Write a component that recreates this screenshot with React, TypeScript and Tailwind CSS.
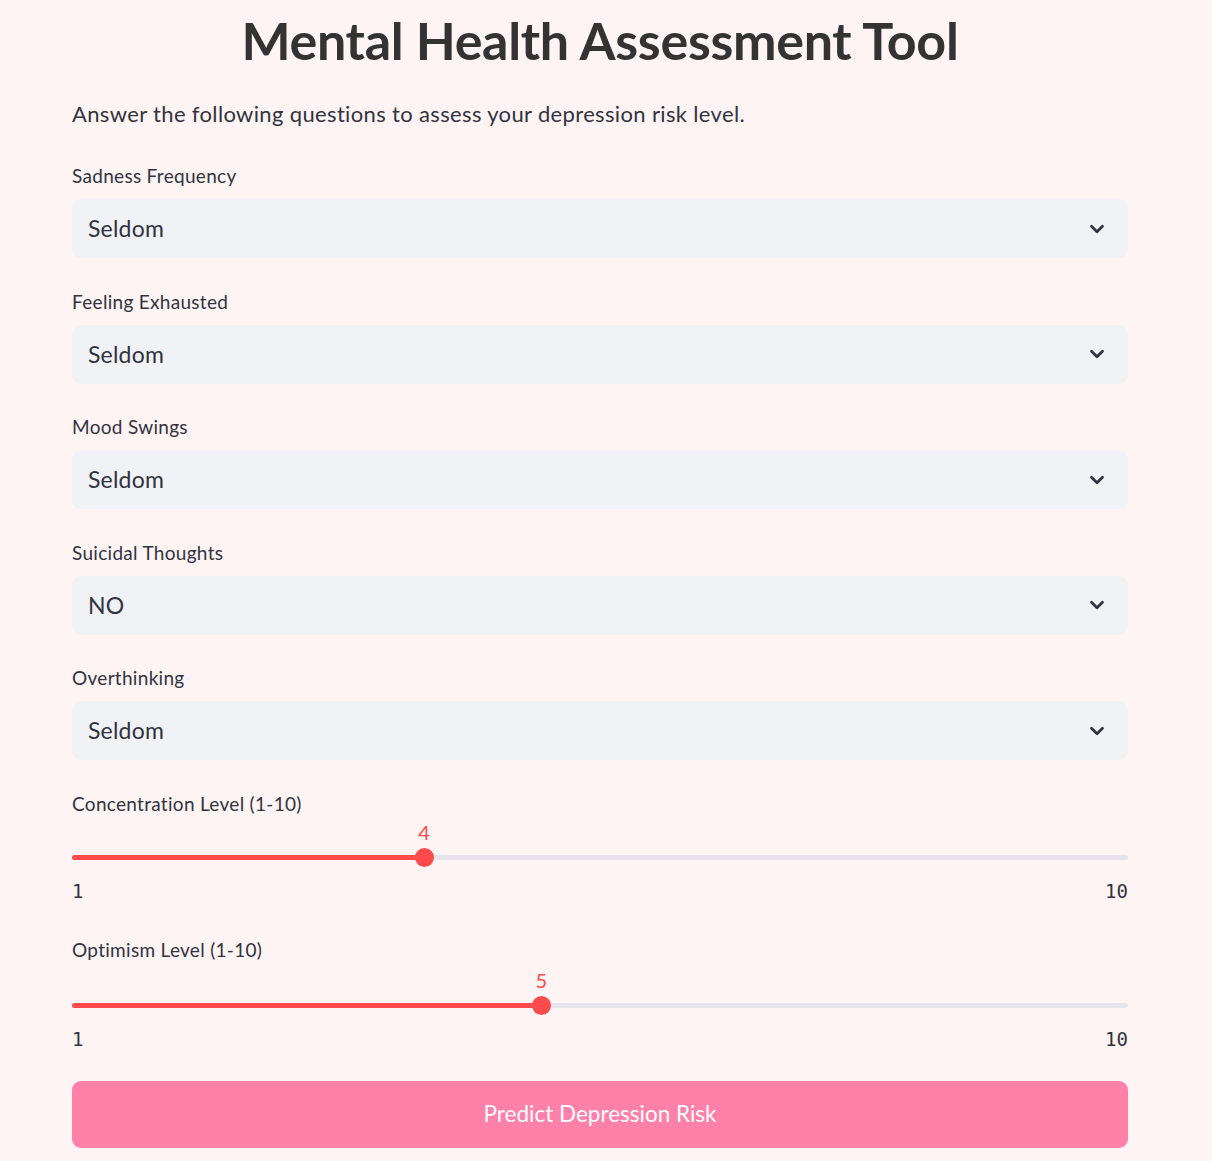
import { ChevronDown } from 'lucide-react';

const selects = [
    { label: 'Sadness Frequency', value: 'Seldom' },
    { label: 'Feeling Exhausted', value: 'Seldom' },
    { label: 'Mood Swings', value: 'Seldom' },
    { label: 'Suicidal Thoughts', value: 'NO' },
    { label: 'Overthinking', value: 'Seldom' },
];

const sliders = [
    { label: 'Concentration Level (1-10)', value: 4 },
    { label: 'Optimism Level (1-10)', value: 5 },
];

const Slider = ({ label, value, last }: { label: string; value: number; last: boolean }) => {
    const pct = ((value - 1) / 9) * 100;
    return (
        <div className={last ? 'mb-[30px]' : 'mb-[35px]'}>
            <label className="block text-[19px] leading-[24px] tracking-[0.3px] text-[#31333f]">{label}</label>
            <div className={last ? 'relative h-[54px]' : 'relative h-[52px]'}>
                <div className="absolute left-0 right-0 bottom-[8px] h-[5px] rounded-full bg-[#e6e3ea]"></div>
                <div className="absolute left-0 bottom-[8px] h-[5px] rounded-full bg-[#ff4b4b]" style={{ width: `${pct}%` }}></div>
                <div className="absolute bottom-[1px] w-[19px] h-[19px] -ml-[9.5px] rounded-full bg-[#ff4b4b]" style={{ left: `${pct}%` }}></div>
                <div className="absolute bottom-[26px] -translate-x-1/2 text-[20px] leading-[20px] text-[#ff4b4b]" style={{ left: `${pct}%` }}>{value}</div>
            </div>
            <div className="flex justify-between mt-[11px] font-['DejaVu_Sans_Mono',monospace] text-[19px] leading-[24px] text-[#31333f]">
                <span>1</span>
                <span>10</span>
            </div>
        </div>
    );
};

const App = () => {
    return (
        <div className="min-h-screen bg-[#fff4f4] font-['Lato',sans-serif] text-[#31333f]">
            <main className="w-[1056px] ml-[72px] pt-[8px] pb-[12px]">
                <h1 className="text-center text-[52px] leading-[64px] font-bold text-[#333333] tracking-[-0.3px]">
                    Mental Health Assessment Tool
                </h1>
                <p className="text-[22px] leading-[32px] tracking-[0.35px] mt-[26px] mb-[34px]">
                    Answer the following questions to assess your depression risk level.
                </p>

                {selects.map((s) => (
                    <div key={s.label} className="mb-[31.5px]">
                        <label className="block text-[19px] leading-[24px] tracking-[0.3px] text-[#31333f] mb-[11px]">{s.label}</label>
                        <div className="h-[59px] rounded-[9px] bg-[#f0f2f6] flex items-center justify-between pl-[16px] pr-[20px]">
                            <span className="text-[23px] tracking-[0.2px]">{s.value}</span>
                            <ChevronDown size={22} strokeWidth={3} className="text-[#31333f]" />
                        </div>
                    </div>
                ))}

                {sliders.map((s, i) => (
                    <Slider key={s.label} {...s} last={i === sliders.length - 1} />
                ))}

                <button className="w-full h-[67px] rounded-[9px] bg-[#ff80a8] text-white text-[22.5px]">
                    Predict Depression Risk
                </button>
            </main>
        </div>
    );
};

export default App;
